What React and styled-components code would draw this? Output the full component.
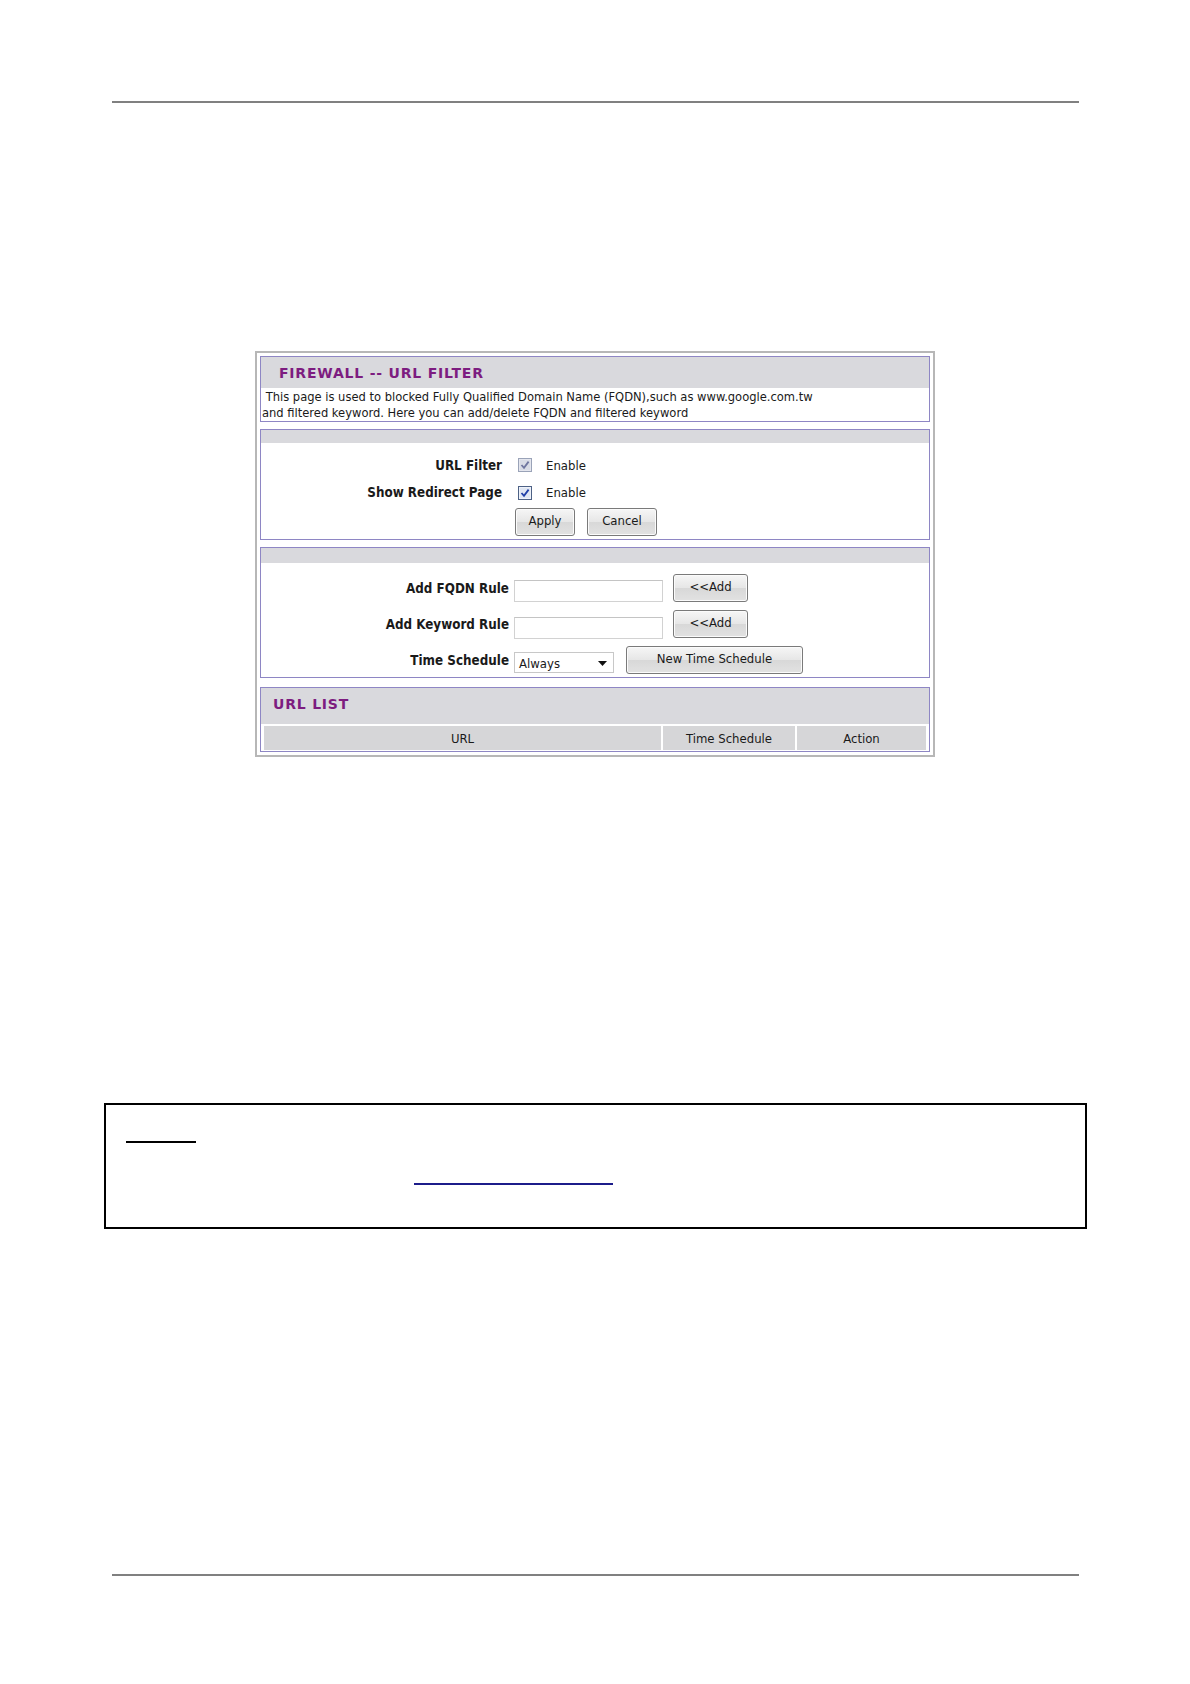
import React from 'react';
import styled, { createGlobalStyle } from 'styled-components';

const GlobalStyle = createGlobalStyle`
    html, body {
        margin: 0;
        padding: 0;
        background: #ffffff;
    }
    body {
        font-family: "DejaVu Sans Condensed", "Liberation Sans", sans-serif;
    }
`

const Page = styled.div`
    width: 1190px;
    min-height: 1684px;
    display: flex;
    flex-direction: column;
    background: #ffffff;
`

const Rule = styled.div`
    margin-left: 112px;
    width: 967px;
    height: 2px;
    background: #808080;
    margin-top: ${p => p.top}px;
`

const Panel = styled.div`
    margin: 248px 0 0 255px;
    width: 670px;
    border: 2px solid #b7b7b7;
    padding: 3px;
    background: #ffffff;
    display: flex;
    flex-direction: column;
    gap: 7px;
    font-size: 13px;
    color: #1a1a1a;
`

const Section = styled.div`
    border: 1px solid #8e86c4;
    background: #ffffff;
    margin-top: ${p => p.gapTop || 0}px;
`

const Band = styled.div`
    background: #d9d9dd;
    height: ${p => p.h}px;
    box-sizing: border-box;
    display: flex;
    align-items: center;
    padding-left: ${p => p.pad || 0}px;
    padding-bottom: ${p => p.pb || 0}px;
`

const Title = styled.span`
    font-family: "DejaVu Sans", Verdana, sans-serif;
    font-weight: bold;
    font-size: 14px;
    letter-spacing: 0.8px;
    color: #7d1c80;
`

const Desc = styled.div`
    padding: 1px 0 0 1px;
    font-size: 12.8px;
    line-height: 16px;
    white-space: pre;
`

const Form = styled.div`
    padding: ${p => p.pt}px 0 ${p => p.pb}px 0;
    display: flex;
    flex-direction: column;
    gap: ${p => p.gap || 0}px;
`

const Row = styled.div`
    display: flex;
    align-items: ${p => p.align || 'center'};
    height: ${p => p.h}px;
`

const Label = styled.div`
    width: ${p => p.w}px;
    text-align: right;
    font-weight: bold;
    font-size: 13.3px;
    padding-right: ${p => p.gap}px;
    box-sizing: border-box;
    align-self: center;
`

const Check = styled.span`
    width: 14px;
    height: 14px;
    display: inline-flex;
    margin-right: 14px;
    svg { display: block; }
`

const Btn = styled.button`
    font-family: inherit;
    font-size: 13px;
    color: #1a1a1a;
    width: ${p => p.w}px;
    height: 28px;
    margin-left: ${p => p.ml || 0}px;
    border: 1px solid #7a7a7a;
    border-radius: 3px;
    background: linear-gradient(#f6f6f6, #e6e6e6 50%, #d8d8d8 51%, #e2e2e2);
    box-shadow: inset 0 0 0 1px #fbfbfb;
    padding: 0 0 4px 0;
`

const Input = styled.div`
    width: 149px;
    height: 22px;
    box-sizing: border-box;
    border: 1px solid #d2d2d2;
    border-top-color: #c4c4c4;
    background: #ffffff;
    margin-bottom: ${p => p.mb || 0}px;
`

const Select = styled.div`
    width: 100px;
    height: 21px;
    box-sizing: border-box;
    border: 1px solid #c8c8c8;
    background: #ffffff;
    display: flex;
    align-items: flex-end;
    justify-content: space-between;
    padding: 0 6px 0 4px;
    margin-bottom: 1px;
    line-height: 17px;
    svg { margin-bottom: 6px; }
`

const Table = styled.div`
    margin: 2px 3px 1px 3px;
    display: grid;
    grid-template-columns: 397px 132px 1fr;
    gap: 2px;
`

const Th = styled.div`
    background: #d6d6d8;
    height: 24px;
    display: flex;
    align-items: center;
    justify-content: center;
`

const Note = styled.div`
    margin: 346px 0 0 104px;
    width: 979px;
    height: 122px;
    border: 2px solid #000000;
    display: flex;
    flex-direction: column;
`

const Blank = styled.span`
    display: block;
    width: ${p => p.w}px;
    height: 2px;
    background: ${p => p.color};
    margin-left: ${p => p.left}px;
    margin-top: ${p => p.top}px;
`

const CheckBox = ({ faded }) => (
    <Check>
        <svg width="14" height="14" viewBox="0 0 14 14">
            <rect x="0.5" y="0.5" width="13" height="13" fill={faded ? '#e4e6ee' : '#eef2fa'} stroke={faded ? '#9aa3b8' : '#4d6185'} />
            <rect x="2" y="2" width="10" height="10" fill={faded ? '#d8dbe6' : '#dfe6f3'} />
            <path d="M3.5 7 L6 9.8 L10.6 3.6" fill="none" stroke={faded ? '#6f76a0' : '#1f3fa8'} strokeWidth="1.8" />
        </svg>
    </Check>
)

class App extends React.Component {
    render() {
        return (
            <Page>
                <GlobalStyle />
                <Rule top={101} />

                <Panel>
                    <Section>
                        <Band h={31} pad={18}>
                            <Title>FIREWALL -- URL FILTER</Title>
                        </Band>
                        <Desc>{' This page is used to blocked Fully Qualified Domain Name (FQDN),such as www.google.com.tw\nand filtered keyword. Here you can add/delete FQDN and filtered keyword'}</Desc>
                    </Section>

                    <Section>
                        <Band h={13} />
                        <Form pt={8} pb={1}>
                            <Row h={28}>
                                <Label w={257} gap={16}>URL Filter</Label>
                                <CheckBox faded />
                                <span>Enable</span>
                            </Row>
                            <Row h={27}>
                                <Label w={257} gap={16}>Show Redirect Page</Label>
                                <CheckBox />
                                <span>Enable</span>
                            </Row>
                            <Row h={32}>
                                <Label w={254} gap={0} />
                                <Btn w={60}>Apply</Btn>
                                <Btn w={70} ml={12}>Cancel</Btn>
                            </Row>
                        </Form>
                    </Section>

                    <Section>
                        <Band h={15} />
                        <Form pt={11} pb={3} gap={8}>
                            <Row h={28} align="flex-end">
                                <Label w={253} gap={5}>Add FQDN Rule</Label>
                                <Input />
                                <Btn w={75} ml={10}>&lt;&lt;Add</Btn>
                            </Row>
                            <Row h={28} align="flex-end">
                                <Label w={253} gap={5}>Add Keyword Rule</Label>
                                <Input mb={-1} />
                                <Btn w={75} ml={10}>&lt;&lt;Add</Btn>
                            </Row>
                            <Row h={28} align="flex-end">
                                <Label w={253} gap={5}>Time Schedule</Label>
                                <Select>
                                    <span>Always</span>
                                    <svg width="9" height="5" viewBox="0 0 9 5">
                                        <path d="M0 0 H9 L4.5 5 Z" fill="#111111" />
                                    </svg>
                                </Select>
                                <Btn w={177} ml={12}>New Time Schedule</Btn>
                            </Row>
                        </Form>
                    </Section>

                    <Section gapTop={2}>
                        <Band h={36} pad={12} pb={5}>
                            <Title>URL LIST</Title>
                        </Band>
                        <Table>
                            <Th>URL</Th>
                            <Th>Time Schedule</Th>
                            <Th>Action</Th>
                        </Table>
                    </Section>
                </Panel>

                <Note>
                    <Blank w={70} color="#000000" left={20} top={36} />
                    <Blank w={199} color="#1c1c8a" left={308} top={40} />
                </Note>

                <Rule top={345} />
            </Page>
        );
    }
}

export default App;
